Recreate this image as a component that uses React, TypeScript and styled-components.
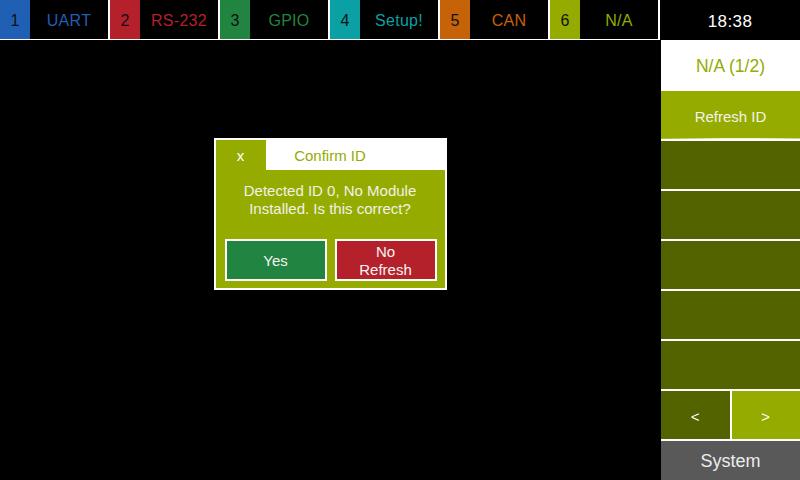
import React from "react";
import styled, { createGlobalStyle } from "styled-components";

const GlobalStyle = createGlobalStyle`
  html, body {
    margin: 0;
    padding: 0;
    background: #000;
  }
  body {
    font-family: "Liberation Sans", Arial, sans-serif;
  }
`;

const OLIVE = "#95ab00";
const DARK_OLIVE = "#536300";

const Screen = styled.div`
  width: 800px;
  height: 480px;
  background: #000;
  display: flex;
  flex-direction: column;
  overflow: hidden;
`;

const TopRow = styled.div`
  display: flex;
  height: 40px;
`;

const TabBar = styled.div`
  width: 660px;
  height: 40px;
  background: #fff;
  display: flex;
  align-items: flex-start;
  gap: 2px;
`;

const Tab = styled.div`
  width: 108px;
  height: 39px;
  background: #000;
  display: flex;
`;

const TabNum = styled.div<{ $color: string }>`
  width: 30px;
  background: ${(p) => p.$color};
  color: #111;
  font-size: 16px;
  display: flex;
  align-items: center;
  justify-content: center;
  padding-top: 3px;
  box-sizing: border-box;
`;

const TabLabel = styled.div<{ $color: string }>`
  flex: 1;
  color: ${(p) => p.$color};
  font-size: 16px;
  letter-spacing: 0.3px;
  display: flex;
  align-items: center;
  justify-content: center;
  padding-top: 3px;
  box-sizing: border-box;
`;

const Clock = styled.div`
  width: 140px;
  height: 40px;
  background: #000;
  color: #fff;
  font-size: 17px;
  letter-spacing: 0.4px;
  display: flex;
  align-items: center;
  justify-content: center;
  padding-top: 3px;
  box-sizing: border-box;
`;

const BottomRow = styled.div`
  flex: 1;
  display: flex;
`;

const Main = styled.div`
  width: 660px;
  background: #000;
  display: flex;
  justify-content: center;
  align-items: flex-start;
  padding-top: 98px;
  box-sizing: border-box;
`;

const SidePanel = styled.div`
  width: 140px;
  border-left: 1px solid #000;
  box-sizing: border-box;
  background: #fff;
  display: flex;
  flex-direction: column;
  gap: 2px;
`;

const PageTitle = styled.div`
  height: 49px;
  background: #fff;
  color: ${OLIVE};
  font-size: 17.5px;
  display: flex;
  align-items: center;
  justify-content: center;
  padding-top: 3px;
  box-sizing: border-box;
`;

const SideButton = styled.div<{ $bg: string; $gloss?: boolean }>`
  height: 48px;
  background: ${(p) =>
    p.$gloss
      ? `linear-gradient(to right, rgba(255,255,255,0.15), rgba(255,255,255,0.85) 45%, rgba(255,255,255,0.85) 70%, rgba(255,255,255,0.5)) bottom / 100% 1px no-repeat, ${p.$bg}`
      : p.$bg};
  color: #f4f4ec;
  font-size: 15px;
  display: flex;
  align-items: center;
  justify-content: center;
  padding-top: 2px;
  box-sizing: border-box;
`;

const NavRow = styled.div`
  height: 48px;
  display: grid;
  grid-template-columns: 1fr 1fr;
  gap: 2px;
`;

const NavButton = styled.div<{ $bg: string }>`
  background: ${(p) => p.$bg};
  color: #fff;
  font-size: 15px;
  display: flex;
  align-items: center;
  justify-content: center;
  padding-top: 3px;
  box-sizing: border-box;
`;

const SystemButton = styled.div`
  flex: 1;
  background: #595959;
  color: #ececec;
  font-size: 18px;
  display: flex;
  align-items: center;
  justify-content: center;
  padding-top: 2px;
  box-sizing: border-box;
`;

const Dialog = styled.div`
  width: 233px;
  height: 152px;
  background: ${OLIVE};
  border: 2px solid #fff;
  box-sizing: border-box;
  display: flex;
  flex-direction: column;
`;

const TitleBar = styled.div`
  height: 30px;
  display: flex;
`;

const CloseTab = styled.div`
  width: 50px;
  background: ${OLIVE};
  color: #fff;
  font-size: 15px;
  display: flex;
  align-items: center;
  justify-content: center;
`;

const TitleText = styled.div`
  flex: 1;
  background: #fff;
  color: ${OLIVE};
  font-size: 15px;
  display: flex;
  align-items: center;
  justify-content: center;
  padding-right: 50px;
  padding-top: 1px;
  box-sizing: border-box;
`;

const Message = styled.div`
  padding-top: 12px;
  color: #f2f2ea;
  font-size: 15px;
  line-height: 18px;
  text-align: center;
`;

const ButtonRow = styled.div`
  margin-top: 21px;
  padding: 0 8px 0 9px;
  display: flex;
  gap: 8px;
`;

const DialogButton = styled.div<{ $bg: string }>`
  width: 102px;
  height: 42px;
  background: ${(p) => p.$bg};
  border: 2px solid #fff;
  box-sizing: border-box;
  color: #f4f4f4;
  font-size: 15px;
  line-height: 18px;
  text-align: center;
  display: flex;
  align-items: center;
  justify-content: center;
  padding-top: 2px;
`;

const tabs = [
  { n: "1", label: "UART", color: "#1f5fb4" },
  { n: "2", label: "RS-232", color: "#b5212b" },
  { n: "3", label: "GPIO", color: "#218440" },
  { n: "4", label: "Setup!", color: "#0aa0a4" },
  { n: "5", label: "CAN", color: "#c66208" },
  { n: "6", label: "N/A", color: OLIVE },
];

export default function App() {
  return (
    <>
      <GlobalStyle />
      <Screen>
        <TopRow>
          <TabBar>
            {tabs.map((t) => (
              <Tab key={t.n}>
                <TabNum $color={t.color}>{t.n}</TabNum>
                <TabLabel $color={t.color}>{t.label}</TabLabel>
              </Tab>
            ))}
          </TabBar>
          <Clock>18:38</Clock>
        </TopRow>
        <BottomRow>
          <Main>
            <Dialog>
              <TitleBar>
                <CloseTab>x</CloseTab>
                <TitleText>Confirm ID</TitleText>
              </TitleBar>
              <Message>
                Detected ID 0, No Module
                <br />
                Installed. Is this correct?
              </Message>
              <ButtonRow>
                <DialogButton $bg="#218440">Yes</DialogButton>
                <DialogButton $bg="#b5212b">
                  No
                  <br />
                  Refresh
                </DialogButton>
              </ButtonRow>
            </Dialog>
          </Main>
          <SidePanel>
            <PageTitle>N/A (1/2)</PageTitle>
            <SideButton $bg={OLIVE} $gloss>
              Refresh ID
            </SideButton>
            <SideButton $bg={DARK_OLIVE} />
            <SideButton $bg={DARK_OLIVE} />
            <SideButton $bg={DARK_OLIVE} />
            <SideButton $bg={DARK_OLIVE} />
            <SideButton $bg={DARK_OLIVE} />
            <NavRow>
              <NavButton $bg={DARK_OLIVE}>&lt;</NavButton>
              <NavButton $bg={OLIVE}>&gt;</NavButton>
            </NavRow>
            <SystemButton>System</SystemButton>
          </SidePanel>
        </BottomRow>
      </Screen>
    </>
  );
}
